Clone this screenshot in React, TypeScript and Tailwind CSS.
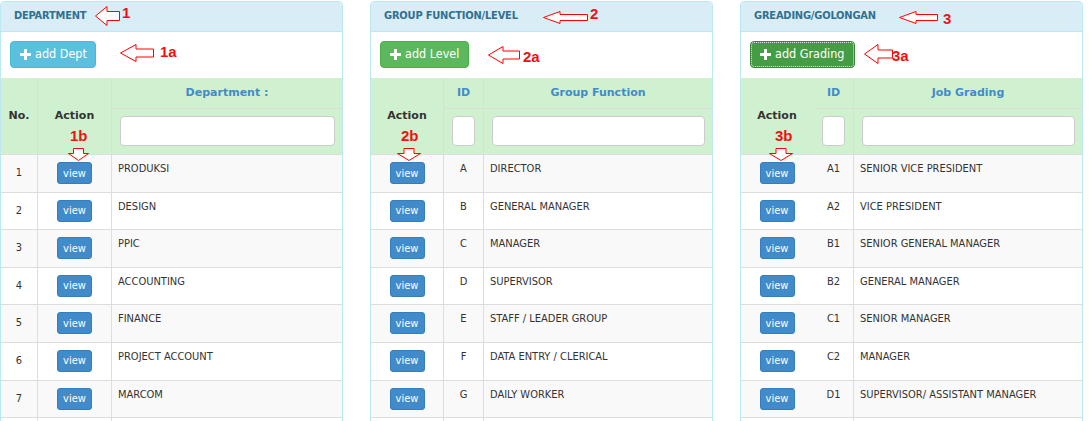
const depts = ["PRODUKSI", "DESIGN", "PPIC", "ACCOUNTING", "FINANCE", "PROJECT ACCOUNT", "MARCOM"];

const levels = [
  ["A", "DIRECTOR"],
  ["B", "GENERAL MANAGER"],
  ["C", "MANAGER"],
  ["D", "SUPERVISOR"],
  ["E", "STAFF / LEADER GROUP"],
  ["F", "DATA ENTRY / CLERICAL"],
  ["G", "DAILY WORKER"],
];

const gradings = [
  ["A1", "SENIOR VICE PRESIDENT"],
  ["A2", "VICE PRESIDENT"],
  ["B1", "SENIOR GENERAL MANAGER"],
  ["B2", "GENERAL MANAGER"],
  ["C1", "SENIOR MANAGER"],
  ["C2", "MANAGER"],
  ["D1", "SUPERVISOR/ ASSISTANT MANAGER"],
];

// table headers use the wider face; titles stay condensed
const bold = "font-['DejaVu_Sans',sans-serif] font-bold";

function LeftArrow({ w, h, head, shaft }: { w: number; h: number; head: number; shaft: number }) {
  const t = (h - shaft) / 2;
  const b = (h + shaft) / 2;
  const pts = `0.5,${h / 2} ${head},0.5 ${head},${t} ${w - 0.5},${t} ${w - 0.5},${b} ${head},${b} ${head},${h - 0.5}`;
  return (
    <svg width={w} height={h} viewBox={`0 0 ${w} ${h}`}>
      <polygon points={pts} fill="white" stroke="#ff0000" strokeWidth="1" />
    </svg>
  );
}

function DownArrow({ w, h }: { w: number; h: number }) {
  const l = w / 2 - 5;
  const r = w / 2 + 5;
  const hs = 5.5;
  const pts = `${l},0.5 ${r},0.5 ${r},${hs} ${w - 0.5},${hs} ${w / 2},${h - 0.5} 0.5,${hs} ${l},${hs}`;
  return (
    <svg width={w} height={h} viewBox={`0 0 ${w} ${h}`}>
      <polygon points={pts} fill="white" stroke="#ff0000" strokeWidth="1" />
    </svg>
  );
}

function Plus() {
  return (
    <svg width="11" height="11" viewBox="0 0 11 11" className="shrink-0">
      <rect x="4" y="0" width="3" height="11" fill="white" />
      <rect x="0" y="4" width="11" height="3" fill="white" />
    </svg>
  );
}

function ViewBtn() {
  return (
    <button className="w-[35px] h-[22px] rounded-[3px] bg-[#428bca] border border-[#357ebd] text-white text-[11px] leading-none">
      view
    </button>
  );
}

function Label({ text, className }: { text: string; className: string }) {
  return (
    <span
      className={`absolute font-['Liberation_Sans',sans-serif] font-bold text-[15px] leading-[15px] text-[#ee1111] ${className}`}
    >
      {text}
    </span>
  );
}

function Panel({
  title,
  button,
  children,
}: {
  title: string;
  button: React.ReactNode;
  children: React.ReactNode;
}) {
  return (
    <div className="relative w-[343px] shrink-0 border border-[#bce8f1] rounded-[4px] bg-white">
      <div className="h-[30px] bg-[#d9edf7] border-b border-[#bce8f1] rounded-t-[4px] flex items-center pl-[13px] text-[#31708f] font-bold tracking-[-0.2px]">
        {title}
      </div>
      <div className="pl-[9px] pt-[9px] pb-[10px]">{button}</div>
      {children}
    </div>
  );
}

function HeadInput({ className }: { className: string }) {
  return <input className={`h-[30px] rounded-[4px] border border-[#ccc] bg-white ${className}`} />;
}

function DeptTable() {
  return (
    <div>
      <div className={`flex h-[77px] bg-[#d0f1d0] border-b border-[#ddd] ${bold}`}>
        <div className="w-[37px] border-r border-[#ddd] flex items-center justify-center">No.</div>
        <div className="w-[74px] border-r border-[#ddd] flex items-center justify-center">Action</div>
        <div className="flex-1 flex flex-col">
          <div className="h-[31px] border-b border-[#ddd] flex items-center justify-center text-[#428bca]">
            Department :
          </div>
          <div className="pl-[8px] pr-[7px] pt-[7px]">
            <HeadInput className="w-full" />
          </div>
        </div>
      </div>
      {depts.map((d, i) => (
        <div key={d} className={`flex h-[37.6px] border-b border-[#ddd] ${i % 2 === 0 ? "bg-[#f9f9f9]" : "bg-white"}`}>
          <div className="w-[37px] border-r border-[#ddd] flex items-center justify-center">{i + 1}</div>
          <div className="w-[74px] border-r border-[#ddd] flex justify-center pt-[7px]">
            <ViewBtn />
          </div>
          <div className="flex-1 pl-[6px] pt-[6px] leading-[16px]">{d}</div>
        </div>
      ))}
      <div className="flex h-[37.6px]">
        <div className="w-[37px] border-r border-[#ddd]" />
        <div className="w-[74px] border-r border-[#ddd]" />
      </div>
    </div>
  );
}

function CodeTable({ rows, head, split }: { rows: string[][]; head: string; split: boolean }) {
  const sep = split ? "border-[#ddd]" : "border-transparent";
  return (
    <div>
      <div className={`flex h-[77px] bg-[#d0f1d0] border-b border-[#ddd] ${bold}`}>
        <div className={`w-[73px] border-r ${sep} flex items-center justify-center`}>Action</div>
        <div className="flex-1 flex flex-col">
          <div className="h-[31px] border-b border-[#ddd] flex text-[#428bca]">
            <div className="w-[40px] border-r border-[#ddd] flex items-center justify-center">ID</div>
            <div className="flex-1 flex items-center justify-center">{head}</div>
          </div>
          <div className="flex-1 flex">
            <div className="w-[40px] border-r border-[#ddd] px-[8px] pt-[7px]">
              <HeadInput className="w-full" />
            </div>
            <div className="flex-1 pl-[8px] pr-[7px] pt-[7px]">
              <HeadInput className="w-full" />
            </div>
          </div>
        </div>
      </div>
      {rows.map(([id, name], i) => (
        <div key={id} className={`flex h-[37.6px] border-b border-[#ddd] ${i % 2 === 0 ? "bg-[#f9f9f9]" : "bg-white"}`}>
          <div className={`w-[73px] border-r ${sep} flex justify-center pt-[7px]`}>
            <ViewBtn />
          </div>
          <div className="w-[40px] border-r border-[#ddd] text-center pt-[6px] leading-[16px]">{id}</div>
          <div className="flex-1 pl-[6px] pt-[6px] leading-[16px]">{name}</div>
        </div>
      ))}
      <div className="flex h-[37.6px]">
        <div className={`w-[73px] border-r ${sep}`} />
        <div className="w-[40px] border-r border-[#ddd]" />
      </div>
    </div>
  );
}

export default function App() {
  return (
    <div className="h-[421px] overflow-hidden bg-white">
      <div className="flex gap-[27px] pt-px font-['DejaVu_Sans_Condensed','DejaVu_Sans',sans-serif] text-[11px] text-[#333]">
        <Panel
          title="DEPARTMENT"
          button={
            <button className="w-[86px] h-[27px] rounded-[4px] bg-[#5bc0de] border border-[#46b8da] text-white text-[12.5px] flex items-center pl-[9px] gap-[4px]">
              <Plus />
              add Dept
            </button>
          }
        >
          <DeptTable />
          <span className="absolute left-[94px] top-[4px]">
            <LeftArrow w={25} h={20} head={12} shaft={9} />
          </span>
          <Label text="1" className="left-[121px] top-[3px]" />
          <span className="absolute left-[119px] top-[42px]">
            <LeftArrow w={34} h={18} head={16} shaft={8} />
          </span>
          <Label text="1a" className="left-[159px] top-[42px]" />
          <Label text="1b" className="left-[69px] top-[126px]" />
          <span className="absolute left-[67px] top-[146px]">
            <DownArrow w={21} h={13} />
          </span>
        </Panel>
        <Panel
          title="GROUP FUNCTION/LEVEL"
          button={
            <button className="w-[89px] h-[27px] rounded-[4px] bg-[#5cb85c] border border-[#4cae4c] text-white text-[12.5px] flex items-center pl-[9px] gap-[4px]">
              <Plus />
              add Level
            </button>
          }
        >
          <CodeTable rows={levels} head="Group Function" split />
          <span className="absolute left-[172px] top-[9px]">
            <LeftArrow w={45} h={13} head={17} shaft={6} />
          </span>
          <Label text="2" className="left-[219px] top-[4px]" />
          <span className="absolute left-[117px] top-[44px]">
            <LeftArrow w={32} h={18} head={15} shaft={8} />
          </span>
          <Label text="2a" className="left-[152px] top-[47px]" />
          <Label text="2b" className="left-[30px] top-[126px]" />
          <span className="absolute left-[26px] top-[146px]">
            <DownArrow w={24} h={13} />
          </span>
        </Panel>
        <Panel
          title="GREADING/GOLONGAN"
          button={
            <button className="w-[105px] h-[27px] rounded-[4px] bg-[#449d44] border border-[#398439] outline-1 outline-dotted outline-white/80 outline-offset-[-2px] text-white text-[12.5px] flex items-center pl-[9px] gap-[4px]">
              <Plus />
              add Grading
            </button>
          }
        >
          <CodeTable rows={gradings} head="Job Grading" split={false} />
          <span className="absolute left-[158px] top-[9px]">
            <LeftArrow w={39} h={13} head={17} shaft={6} />
          </span>
          <Label text="3" className="left-[202px] top-[9px]" />
          <span className="absolute left-[123px] top-[42px]">
            <LeftArrow w={29} h={20} head={14} shaft={8} />
          </span>
          <Label text="3a" className="left-[151px] top-[46px]" />
          <Label text="3b" className="left-[34px] top-[126px]" />
          <span className="absolute left-[28px] top-[146px]">
            <DownArrow w={24} h={13} />
          </span>
        </Panel>
      </div>
    </div>
  );
}
